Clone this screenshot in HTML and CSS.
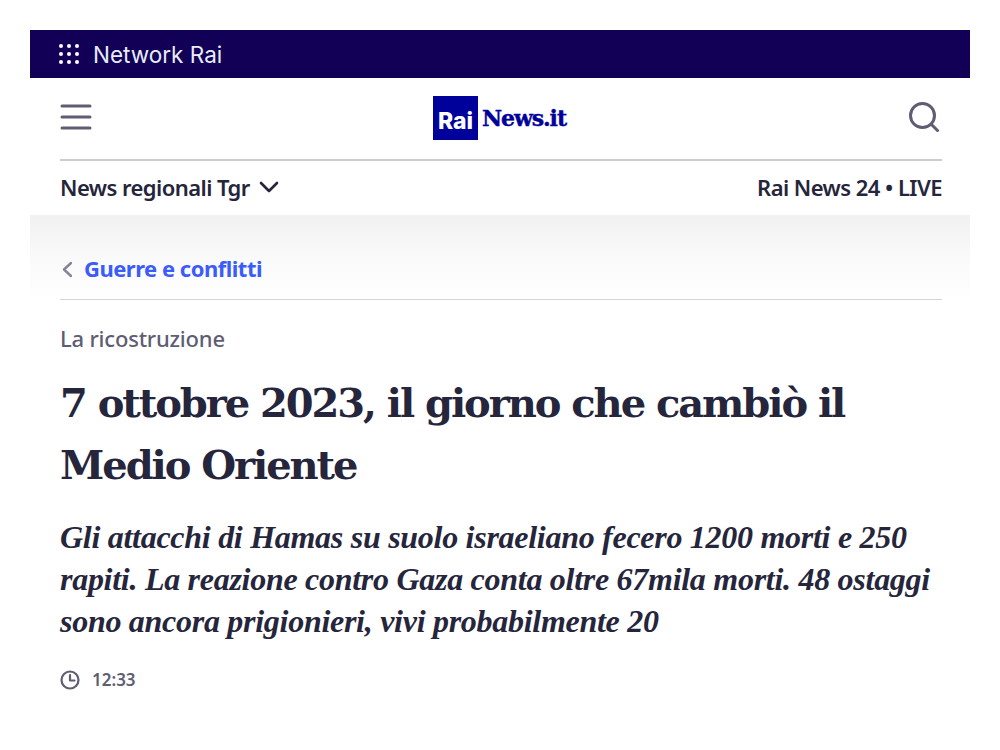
FILE: index.html
```html
<!DOCTYPE html>
<html lang="it">
<head>
  <meta charset="UTF-8" />
  <title>7 ottobre 2023, il giorno che cambiò il Medio Oriente</title>
  <link rel="stylesheet" href="styles.css">
</head>
<body>
  <div class="page">
    <div class="network-bar">
      <svg class="dots" width="22" height="22" viewBox="0 0 22 22" fill="#fff">
        <circle cx="3" cy="3" r="2"/><circle cx="11" cy="3" r="2"/><circle cx="19" cy="3" r="2"/>
        <circle cx="3" cy="11" r="2"/><circle cx="11" cy="11" r="2"/><circle cx="19" cy="11" r="2"/>
        <circle cx="3" cy="19" r="2"/><circle cx="11" cy="19" r="2"/><circle cx="19" cy="19" r="2"/>
      </svg>
      <span>Network Rai</span>
    </div>

    <header class="site-header">
      <div class="header-main">
        <svg width="32" height="26" viewBox="0 0 32 26" fill="none" stroke="#5f5d73" stroke-width="3" stroke-linecap="round">
          <path d="M2 2h28M2 13h28M2 24h28"/>
        </svg>
        <div class="logo">
          <span class="logo-box">Rai</span>
          <span class="logo-name">News.it</span>
        </div>
        <svg width="33" height="32" viewBox="0 0 33 32" fill="none" stroke="#5f5d73" stroke-width="3" stroke-linecap="round">
          <circle cx="13.500" cy="14.500" r="12"/>
          <path d="M22.500 23.500l6 6"/>
        </svg>
      </div>
      <div class="header-sub">
        <div class="regional">
          <span>News regionali Tgr</span>
          <svg width="20" height="12" viewBox="0 0 20 12" fill="none" stroke="#25253c" stroke-width="2.6" stroke-linecap="round" stroke-linejoin="round">
            <path d="M2 2l8 8 8-8"/>
          </svg>
        </div>
        <div>Rai News 24 • LIVE</div>
      </div>
    </header>

    <main class="article">
      <nav class="crumb">
        <svg width="12" height="17" viewBox="0 0 12 17" fill="none" stroke="#85849a" stroke-width="2.4" stroke-linecap="round" stroke-linejoin="round">
          <path d="M11 2L4 8.500l7 6.500"/>
        </svg>
        <a href="#">Guerre e conflitti</a>
      </nav>
      <p class="kicker">La ricostruzione</p>
      <h1>7 ottobre 2023, il giorno che cambiò il Medio Oriente</h1>
      <p class="lead">Gli attacchi di Hamas su suolo israeliano fecero 1200 morti e 250 rapiti. La reazione contro Gaza conta oltre 67mila morti. 48 ostaggi sono ancora prigionieri, vivi probabilmente 20</p>
      <div class="time">
        <svg width="20" height="20" viewBox="0 0 20 20" fill="none" stroke="#5f5d73" stroke-width="2.2" stroke-linecap="round" stroke-linejoin="round">
          <circle cx="10" cy="10" r="8.500"/>
          <path d="M10 5v5.500h4.500"/>
        </svg>
        <span>12:33</span>
      </div>
    </main>
  </div>
</body>
</html>
```

FILE: styles.css
```css
body {
  margin: 0;
  background: #fff;
  font-family: "Noto Sans", sans-serif;
  color: #25253c;
}
.page {
  margin: 30px 30px 0;
}
.network-bar {
  height: 48px;
  background: #110055;
  color: #e8ecfa;
  display: flex;
  align-items: center;
  gap: 13px;
  padding-left: 28px;
  font-family: Inter, sans-serif;
  font-size: 22.5px;
}
.site-header {
  padding: 0 28px 0 30px;
}
.header-main {
  height: 83px;
  box-sizing: border-box;
  padding-bottom: 3px;
  display: flex;
  align-items: center;
  justify-content: space-between;
  border-bottom: 2px solid #cccbd6;
}
.logo {
  display: flex;
  align-items: center;
  gap: 4px;
  margin: 2px 2px 0 0;
}
.logo-box {
  width: 45px;
  height: 44px;
  background: #00009a;
  color: #fff;
  display: flex;
  align-items: center;
  justify-content: center;
  font-family: Inter, sans-serif;
  font-weight: 800;
  font-size: 23px;
  padding-top: 6px;
  box-sizing: border-box;
}
.logo-name {
  color: #00009a;
  font-family: "DejaVu Serif", serif;
  font-weight: 700;
  font-size: 22px;
  letter-spacing: -1.1px;
  -webkit-text-stroke: 0.4px #00009a;
}
.header-sub {
  height: 54px;
  box-sizing: border-box;
  padding-bottom: 2px;
  display: flex;
  align-items: center;
  justify-content: space-between;
  font-size: 22px;
  font-weight: 600;
  letter-spacing: -0.55px;
}
.regional {
  display: flex;
  align-items: center;
  gap: 9px;
}
.article {
  padding: 0 28px 0 30px;
  background: linear-gradient(#f1f1f1, #fafafa 45px, #fff 85px);
}
.crumb {
  height: 85px;
  box-sizing: border-box;
  padding-bottom: 16px;
  display: flex;
  align-items: flex-end;
  gap: 12px;
  border-bottom: 1px solid #d4d3dc;
  font-size: 22px;
  font-weight: 700;
  line-height: 30px;
  letter-spacing: -0.5px;
}
.crumb svg {
  margin-bottom: 5px;
}
.crumb a {
  color: #3c5cfa;
  text-decoration: none;
}
.kicker {
  margin: 23px 0 0;
  color: #5f5d73;
  font-size: 22px;
  font-weight: 500;
  line-height: 30px;
  letter-spacing: -0.2px;
}
h1 {
  margin: 19px 0 0;
  font-family: "DejaVu Serif", serif;
  font-size: 40px;
  font-weight: 700;
  line-height: 62px;
  letter-spacing: -2.05px;
}
.lead {
  margin: 20px 0 0;
  font-family: "Liberation Serif", serif;
  font-style: italic;
  font-weight: 700;
  font-size: 32px;
  line-height: 42px;
  letter-spacing: -0.28px;
}
.time {
  margin-top: 26px;
  display: flex;
  align-items: center;
  gap: 12px;
  color: #5f5d73;
  font-size: 17px;
  font-weight: 600;
}
```
